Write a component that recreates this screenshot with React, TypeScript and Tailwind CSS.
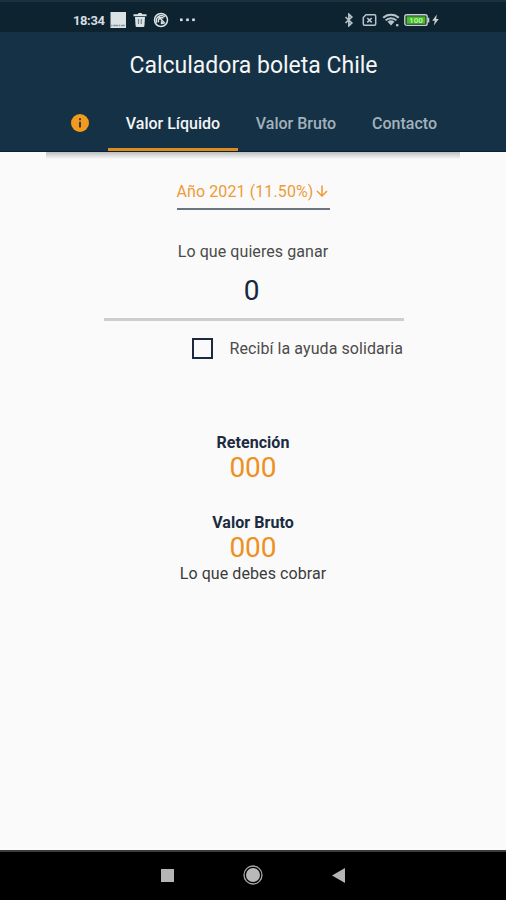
import { useState } from "react";

const TABS = [
  { id: "liquido", label: "Valor Líquido", width: "w-[130px]" },
  { id: "bruto", label: "Valor Bruto", width: "w-[116px]" },
  { id: "contacto", label: "Contacto", width: "w-[101px]" },
];

function StatusBar() {
  return (
    <div className="flex h-8 items-center justify-between border-t-2 border-[#1b3140] bg-[#0d2330] pt-1.5 pr-[67px] pl-[73px] text-[#d5dde2]">
      <div className="flex items-center">
        <span className="w-[37px] pt-px text-[13px] leading-4 font-bold tracking-[-0.4px] whitespace-nowrap">
          18:34
        </span>
        {/* Notification icons */}
        <svg className="h-4 w-4" viewBox="0 0 16 16">
          <rect x="0.5" y="0" width="15.5" height="16" fill="#dce3e5" />
          <path d="M1 13.5h14" stroke="#83969f" strokeWidth="1.6" strokeDasharray="1.5 0.7 5 0.6" />
        </svg>
        <svg className="ml-[7px] h-4 w-[14px]" viewBox="0 0 14 16">
          <path d="M0.5 2.2h4.1L5.7 1h2.6l1.1 1.2h4.1v2H.5zM2 5h10l-.6 9.2-.9.8h-7l-.9-.8z" fill="#dce3e5" />
          <path d="M5.5 7v5M8.3 7v5" stroke="#73848c" strokeWidth="1.2" />
        </svg>
        <svg className="ml-[6px] h-4 w-4" viewBox="0 0 16 16" fill="none" stroke="#dce3e5">
          <circle cx="8" cy="8" r="6.5" strokeWidth="1.5" />
          <path d="M3.8 10.8a5 5 0 0 1 8-5.7M5.7 10.3a3.2 3.2 0 0 1 4.8-4M6 5l5.8 6.2" strokeWidth="1.4" />
          <path d="M7.8 8.3l3.6 3.7-3.6.3z" fill="#dce3e5" stroke="none" />
        </svg>
        <svg className="ml-[11px] h-4 w-4" viewBox="0 0 16 16" fill="#dce3e5">
          <rect x="0" y="6.5" width="2.6" height="2.6" />
          <rect x="6.2" y="6.5" width="2.6" height="2.6" />
          <rect x="12.2" y="6.5" width="2.6" height="2.6" />
        </svg>
      </div>
      <div className="flex items-center">
        <svg className="h-[14px] w-3" viewBox="0 0 12 14" fill="none" stroke="#b9c3ca" strokeWidth="1.7">
          <path d="M2.5 4l6.3 6-2.9 2.7V1.3L8.8 4l-6.3 6" />
        </svg>
        <svg className="ml-[7px] h-[14px] w-[15px]" viewBox="0 0 15 14" fill="none" stroke="#b9c3ca">
          <path d="M4 1.7h8.5q1.2 0 1.2 1.2v8.2q0 1.2-1.2 1.2h-10q-1.2 0-1.2-1.2V4.5z" strokeWidth="1.5" />
          <path d="M5.3 5l4.4 4.4M9.7 5L5.3 9.4" strokeWidth="1.6" />
        </svg>
        <svg className="ml-[5px] h-[14px] w-[18px]" viewBox="0 0 18 14" fill="none" stroke="#b9c3ca">
          <path d="M1.2 4.8c4.2-4.2 11.4-4.2 15.6 0M3.6 7.4c3-3 7.8-3 10.8 0" strokeWidth="2" />
          <path d="M5.5 8.7c2-1.8 5-1.8 7 0L9 12.4z" fill="#b9c3ca" stroke="none" />
          <path d="M14 12.2h2.4" strokeWidth="2.2" />
        </svg>
        <svg className="ml-[4px] h-[14px] w-[26px]" viewBox="0 0 26 14">
          <rect x="0.8" y="1.8" width="22.4" height="10.6" rx="2" fill="#183523" stroke="#c5ced1" strokeWidth="1.4" />
          <rect x="2.6" y="3.4" width="18.8" height="7.4" fill="#49b82f" />
          <path d="M24 4.8h1.3v4.6H24z" fill="#c5ced1" />
          <text x="12" y="10" textAnchor="middle" fontSize="8" fontWeight="700" fill="#b9f2a2">
            100
          </text>
        </svg>
        <svg className="ml-[2px] h-[12px] w-[7px]" viewBox="0 0 7 12" fill="#c5ced1">
          <path d="M4.8 0.5L.2 6.8h2.6L1.8 11.5l5-6.5H4.2z" />
        </svg>
      </div>
    </div>
  );
}

function Result({ label, value }: { label: string; value: string }) {
  return (
    <div className="flex flex-col items-center">
      <p className="text-base leading-5 font-bold tracking-[0.05px] text-[#1c2b40]">{label}</p>
      <p className="text-[28px] leading-[30px] text-[#ef9023]">{value}</p>
    </div>
  );
}

function NavigationBar() {
  return (
    <div className="flex h-[50px] items-center justify-between border-t-2 border-[#3c3c3c] bg-black px-[161px] pb-0.5">
      <div className="h-[13px] w-[13px] bg-[#b5b5b5]" />
      <svg className="h-5 w-5" viewBox="0 0 20 20">
        <circle cx="10" cy="10" r="9" fill="none" stroke="#a8a8a8" strokeWidth="1.3" />
        <circle cx="10" cy="10" r="7" fill="#b9b9b9" />
      </svg>
      <svg className="h-[15px] w-[13px]" viewBox="0 0 13 15">
        <path d="M0 7.5L13 0v15z" fill="#b5b5b5" />
      </svg>
    </div>
  );
}

export default function App() {
  const [activeTab, setActiveTab] = useState("liquido");
  const [checked, setChecked] = useState(false);

  return (
    <div className="flex h-[900px] w-[506px] flex-col overflow-hidden bg-[#fafafa] font-[Roboto,sans-serif]">
      <StatusBar />
      <header className="h-[120px] border-b border-[#102039] bg-[#143145]">
        <h1 className="h-[63px] pt-[18px] pl-px text-center text-[23px] leading-8 text-[#f4f6f7]">
          Calculadora boleta Chile
        </h1>
        <nav className="flex h-14 pl-[52px]">
          <button className="flex w-14 items-center justify-center" aria-label="Información">
            <svg className="h-[18px] w-[18px]" viewBox="0 0 18 18">
              <circle cx="9" cy="9" r="9" fill="#f39a1c" />
              <path d="M9 4.2v2M9 7.8v5.6" stroke="#28374a" strokeWidth="1.9" />
            </svg>
          </button>
          {TABS.map((tab) => (
            <button
              key={tab.id}
              onClick={() => setActiveTab(tab.id)}
              className={`${tab.width} border-b-[3px] pt-[5px] text-base font-medium whitespace-nowrap ${
                activeTab === tab.id ? "border-[#df8c18] text-[#f2f4f6]" : "border-transparent text-[#a3b1bc]"
              }`}
            >
              {tab.label}
            </button>
          ))}
        </nav>
      </header>
      <div className="mx-auto h-[7px] w-[414px] bg-linear-to-b from-[#bdbfc0] to-[#fafafa]" />

      <main className="flex flex-1 flex-col items-center">
        <button className="mt-[20px] flex h-[31px] w-[153px] items-start border-b-2 border-[#6b747f] pt-px text-base leading-6 tracking-[0.1px] whitespace-nowrap text-[#ee9b36]">
          Año 2021 (11.50%)
          <svg
            className="mt-[5px] ml-[3px] h-3 w-3 shrink-0"
            viewBox="0 0 12 12"
            fill="none"
            stroke="currentColor"
            strokeWidth="1.5"
          >
            <path d="M6 .5v10.5M1 6l5 5 5-5" />
          </svg>
        </button>

        <p className="mt-8 text-base leading-5 tracking-[0.08px] text-[#4b4b4b]">Lo que quieres ganar</p>
        <div className="ml-px flex h-[59px] w-[300px] items-center justify-center border-b-[3px] border-[#cecece] pt-px pr-[4px] text-[28px] text-[#15283d]">
          0
        </div>
        <label className="mt-[17px] flex h-[21px] w-[300px] items-center justify-end gap-[17px]">
          <input
            type="checkbox"
            checked={checked}
            onChange={() => setChecked(!checked)}
            className="h-[21px] w-[21px] appearance-none border-2 border-[#1c2942] checked:bg-[#1c2942]"
          />
          <span className="text-base leading-5 tracking-[0.07px] whitespace-nowrap text-[#4b4b4b]">
            Recibí la ayuda solidaria
          </span>
        </label>

        <div className="mt-[74px] flex flex-col gap-[30px]">
          <Result label="Retención" value="000" />
          <Result label="Valor Bruto" value="000" />
        </div>
        <p className="mt-px text-base leading-5 tracking-[0.08px] text-[#3b3b3b]">Lo que debes cobrar</p>
      </main>
      <NavigationBar />
    </div>
  );
}
